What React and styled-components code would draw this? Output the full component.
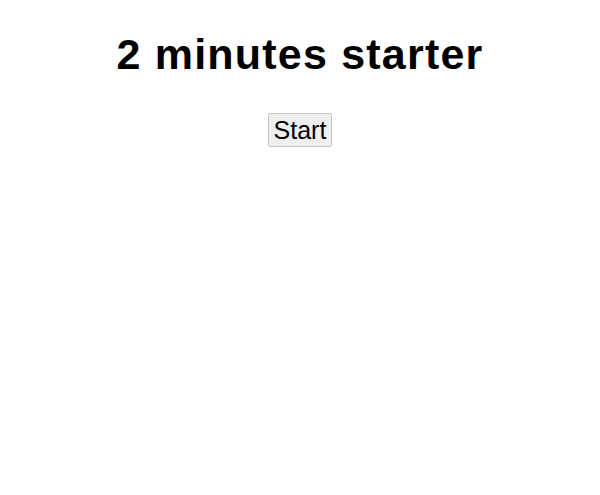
import styled, { createGlobalStyle } from "styled-components";

const GlobalStyle = createGlobalStyle`
  body {
    margin: 0;
    background: #fff;
    font-family: "Liberation Sans", Arial, sans-serif;
  }
`;

const Page = styled.div`
  display: flex;
  flex-direction: column;
  align-items: center;
  padding-top: 30px;
`;

const Title = styled.h1`
  margin: 0;
  font-size: 43px;
  line-height: 48px;
  font-weight: bold;
  letter-spacing: 1.2px;
  color: #000;
`;

const StartButton = styled.button`
  margin-top: 35px;
  height: 34px;
  padding: 0 5px;
  font-family: "Liberation Sans", Arial, sans-serif;
  font-size: 25px;
  line-height: 32px;
  color: #000;
  background: #efefef;
  border: 1px solid #c4c4c4;
  border-radius: 2px;
  cursor: pointer;
`;

function App() {
  return (
    <>
      <GlobalStyle />
      <Page>
        <Title>2 minutes starter</Title>
        <StartButton>Start</StartButton>
      </Page>
    </>
  );
}

export default App;
